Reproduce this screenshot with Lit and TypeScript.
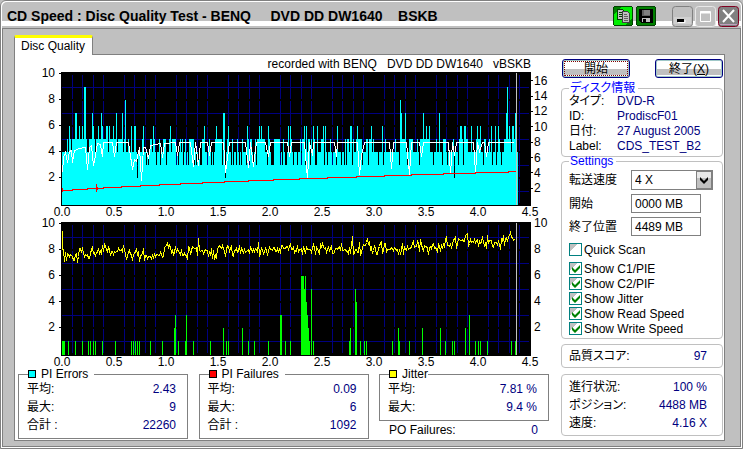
import { LitElement, html, svg, css } from "lit";
import { customElement, property } from "lit/decorators.js";

type Point = [number, number];
type Run = [number, number, number];

// Plot area is 470 x 134 units; one value unit is 13 tall and zero sits at y 132.
const W = 470;
const H = 134;
const ZERO = 132;
const UNIT = 13;

const bars = (color: string, runs: Run[]) =>
  runs.map(([x, w, v]) => svg`<rect x=${x} y=${ZERO - v * UNIT} width=${w} height=${v * UNIT + 1} fill=${color}></rect>`);

const grid = () => {
  const out = [];
  for (let k = 1; k < 45; k++) {
    if (k % 5 === 0) continue;
    const x = Math.round(0.5 + k * 10.4);
    for (let b = 0; b < 5; b++) out.push(svg`<rect x=${x} y=${3 + b * 26} width="1" height="24" fill="#000080"></rect>`);
  }
  for (const v of [1, 3, 5, 7, 9]) out.push(svg`<rect x="1" y=${ZERO - v * UNIT} width="467" height="1" fill="#000080"></rect>`);
  return out;
};

const pieLevels = (): number[] => {
  const lv = new Array(456).fill(4);
  const put = (v: number, list: (number | Point)[]) =>
    list.forEach((e) => {
      const [a, b] = typeof e === "number" ? [e, e] : e;
      for (let i = a; i <= b; i++) lv[i] = v;
    });
  put(5, [5, 8, [10, 22], [24, 24], [27, 32], [34, 44], [47, 54], [56, 60], 62, 63, 66, 69, 72, 73, 80, 88, 89, 92, 97, [101, 103], 107, 108, [110, 113], 118, 120, 123, [127, 131], 140, 141, 147, [153, 159], 165, 166, 170, 175, 180, 186, 188, 189, [193, 196], [198, 202], 207, [212, 217], 221, 226, 229]);
  put(5, [[238, 244], [246, 249], 252, 253, [259, 260], 268, 274, [282, 286], 291, [294, 299], [304, 309], 311, 323, 333, [338, 343], [347, 350], 355, [358, 366], 371, 374, [380, 383], 391, [396, 401], [404, 405], 409, 414, [416, 418], 427, 433, 437, [422, 423], [442, 448], 451, 452]);
  put(3, [45, 81, 84, 86, 94, 98, 104, 114, 116, 121, 124, 126, 132, 134, 136, [138, 139], 142, 145, 149, 151, 160, 169, 171, 174, 177, 179, 184, 187, 191, 194, 205, 209, [210, 211], 218, 220, [223, 224], 228]);
  put(3, [231, 235, 239, 243, 248, [253, 254], 262, 265, 270, 274, 279, 282, 284, 290, 300, 306, 316, 321, 337, 345, 357, 371, 380, 385, 396, 401, 412, 421, 430, 434, 439]);
  put(6, [7, 14, 17, 20, 31, 36, 40, 44, 45, 47, 51, 69, 72, 73, 81, 91, 108, 142, 154, 166, 185, 197, 199, 206, 226, 228, 242, 244, 251, 255, 261, 263, 275, 288, 289, 295, 309, 320, 364, 367, 398, 399, 402, 403, 409, 415, 418, 429, 433, 436, 450, 451, 447]);
  put(7, [13, 14, 30, 39, 54, 60, 161, 162, 339, 343, 361, 377, 444, 453]);
  put(8, [63, 338]);
  put(9, [22, 23, 445]);
  put(2, [75, 163, 392]);
  return lv;
};

const PIE: Run[] = pieLevels().map((v, i) => [i + 1, 1, v] as Run).reduce<Run[]>((acc, r) => {
  const last = acc[acc.length - 1];
  if (last && last[2] === r[2]) last[1]++;
  else acc.push([...r] as Run);
  return acc;
}, []);

const READ: Point[] = [
  [1, 100], [2, 85], [4, 80], [6, 90], [8, 79], [10, 78], [11, 90], [13, 78], [18, 76], [24, 75], [26, 97], [28, 75], [30, 73], [32, 93], [34, 83], [36, 71], [39, 72],
  [41, 84], [42, 70], [51, 70], [53, 84], [55, 70], [67, 70], [71, 97], [73, 87], [75, 89], [78, 75], [80, 108], [82, 75], [84, 75], [87, 86], [89, 73], [99, 71], [101, 85],
  [103, 71], [114, 70], [116, 83], [118, 70], [129, 70], [132, 94], [134, 70], [137, 93], [139, 70], [146, 70], [148, 83], [150, 70], [162, 70], [164, 100], [168, 70],
  [184, 70], [187, 95], [189, 70], [192, 94], [195, 70], [204, 70], [207, 84], [209, 70], [226, 70], [228, 84], [230, 70], [243, 70], [246, 106], [248, 70], [251, 83],
  [252, 70], [273, 70], [275, 84], [276, 70], [296, 70], [298, 102], [300, 83], [303, 70], [328, 70], [330, 96], [332, 70], [345, 70], [348, 102], [350, 70], [358, 70],
  [360, 84], [362, 70], [387, 70], [389, 101], [391, 70], [393, 83], [395, 70], [412, 70], [414, 100], [416, 70], [418, 79], [421, 70], [423, 70], [425, 84], [427, 70], [452, 70],
];

const WRITE: Point[] = [
  [1, 118], [11, 117], [26, 116], [42, 115], [60, 114], [79, 113], [98, 112], [119, 111], [141, 110], [163, 109], [187, 108], [212, 107],
  [238, 106], [266, 105], [295, 104], [323, 103], [350, 102], [382, 101], [414, 100], [447, 99], [454, 99],
];

const JITTER_MID: Point[] = [
  [2, 32], [13, 34], [20, 31], [25, 32], [32, 30], [40, 30], [44, 25], [48, 27], [51, 31], [60, 27], [66, 32], [74, 31], [83, 33], [101, 33], [103, 23], [109, 25], [112, 32],
  [116, 28], [124, 35], [127, 28], [146, 28], [153, 31], [157, 30], [169, 26], [176, 29], [186, 27], [199, 26], [202, 29], [216, 26], [230, 27], [249, 27], [252, 25],
  [257, 27], [269, 24], [282, 28], [290, 25], [297, 28], [306, 21], [311, 28], [319, 26], [334, 28], [352, 25], [362, 22], [366, 25], [376, 27], [382, 20], [389, 24],
  [394, 20], [401, 17], [406, 16], [408, 24], [411, 19], [426, 20], [432, 18], [439, 23], [442, 18], [448, 13], [455, 18],
];

const jitterLine = (): string => {
  const pts: string[] = ["1,8", "1,27"];
  let seed = 41;
  let seg = 0;
  for (let x = 2; x <= 454; x++) {
    while (seg < JITTER_MID.length - 2 && JITTER_MID[seg + 1][0] < x) seg++;
    const [ax, ay] = JITTER_MID[seg];
    const [bx, by] = JITTER_MID[seg + 1];
    seed = (seed * 1103515245 + 12345) % 2147483648;
    const r = seed / 2147483648 - 0.5;
    let y = ay + ((by - ay) * (x - ax)) / (bx - ax) + r * Math.abs(r) * 28;
    if (x === 137) y = 16;
    if (x === 291) y = 14;
    pts.push(`${x},${Math.round(y)}`);
  }
  return pts.join(" ");
};

const PIF: Run[] = [
  [1, 3, 1], ...[7, 14, 21, 27, 29, 32, 34, 41, 54, 70, 72, 74, 76, 78, 89, 101].map((x) => [x, 1, 1] as Run),
  [113, 1, 2], [114, 1, 3], [117, 1, 1], [124, 1, 1], [125, 1, 3], [132, 1, 1], [149, 1, 1], [162, 1, 2], [165, 1, 1], [167, 1, 1], [181, 1, 2],
  [187, 1, 1], [193, 1, 1], [207, 1, 1], [219, 2, 3], [224, 1, 1], [229, 1, 1],
  [240, 3, 6], [243, 1, 5], [244, 1, 6], [245, 1, 4], [246, 1, 3], [247, 1, 2], [248, 1, 1], [250, 1, 5], [252, 1, 1], [288, 1, 1], [289, 1, 2],
  [294, 1, 5], [295, 1, 4], [299, 1, 1], [303, 1, 1], [305, 1, 1], [331, 1, 1], [337, 1, 2], [338, 1, 1], [348, 1, 1], [361, 1, 2], [379, 1, 2],
  [384, 1, 1], [391, 1, 1], [393, 1, 1], [404, 1, 2], [408, 1, 3], [414, 1, 1], [417, 1, 1], [419, 1, 1], [426, 1, 1], [450, 1, 1], [454, 1, 1],
];

const path = (pts: Point[]) => pts.map((p) => p.join(",")).join(" ");
const steps = (pts: Point[]) =>
  pts.map(([x, y], i) => (i ? `H${x}V${y}` : `M${x},${y}`)).join("");

@customElement("scan-chart")
export class ScanChart extends LitElement {
  @property() kind = "errors";
  @property({ type: Array }) right: number[] = [];

  static styles = css`
    :host { display: grid; grid-template-columns: 46px 1fr 19px; }
    .left, .right { display: flex; flex-direction: column; }
    .left { margin: -12px 0 16px; }
    .left span { display: flex; align-items: center; justify-content: flex-end; flex: 1; gap: 4px; }
    .left span::after { content: ""; width: 2px; height: 1px; background: #000; }
    .right span { display: flex; align-items: center; flex: 1; gap: 1px; }
    .right span::before { content: ""; width: 2px; height: 1px; background: #000; }
    .fine { padding: 1px 0 10px; }
    .even { margin: -12px 0 16px; }
    .even span::before { background: none; }
    .plot { display: block; width: 100%; height: 134px; background: #000; }
    .axis { grid-column: 2; display: grid; grid-template-columns: repeat(10, 1fr); margin: 0 -25px 0 -25px; height: 16px; line-height: 12px; text-align: center; }
  `;

  render() {
    const errors = this.kind === "errors";
    return html`
      <div class="left">${[10, 8, 6, 4, 2].map((n) => html`<span>${n}</span>`)}</div>
      <svg class="plot" viewBox="0 0 ${W} ${H}" preserveAspectRatio="none" shape-rendering="crispEdges">
        ${grid()}
        ${errors
          ? svg`${bars("#00ffff", PIE)}
              <polyline points=${path(READ)} transform="translate(.5 .5)" fill="none" stroke="#fff"></polyline>
              <path d=${steps(WRITE)} transform="translate(.5 .5)" fill="none" stroke="#f00"></path>
              <path d="M1.5 116v4M35.5 112v8M36.5 115v3" stroke="#f00"></path>`
          : svg`${bars("#00ff00", PIF)}
              <polyline points=${jitterLine()} transform="translate(.5 .5)" fill="none" stroke="#ff0"></polyline>`}
        <rect x="455" y="1" width="1" height="132" fill="#c0c0c0"></rect>
      </svg>
      <div class="right ${errors ? "fine" : "even"}">${this.right.map((n) => html`<span>${n}</span>`)}</div>
      <div class="axis">${Array.from({ length: 10 }, (_, i) => html`<span>${(i / 2).toFixed(1)}</span>`)}</div>
    `;
  }
}

@customElement("app-root")
export class AppRoot extends LitElement {
  static styles = css`
    :host { display: block; font: 12px/14px "Liberation Sans", "Noto Sans CJK JP", sans-serif; font-feature-settings: "palt"; color: #000; background: #c0c0c0; }
    * { box-sizing: border-box; }
    .window { display: flex; flex-direction: column; min-height: 100vh; padding: 1px; border: 1px solid #808080; border-radius: 6px 6px 0 0; background: #fff; }
    .title { display: flex; align-items: center; height: 26px; padding: 2px 2px 0 5px; background: linear-gradient(#c0c0c0 19px, #fff 19px 24px, #c0c0c0 24px); border-radius: 5px 5px 0 0; }
    .title h1 { flex: 1; margin: 0; font: bold 14px/24px "Liberation Sans", sans-serif; white-space: pre; }
    .tool { width: 20px; height: 20px; margin-right: 3px; padding: 0; border: 0; background: none; }
    .win { width: 21px; height: 21px; margin-left: 2px; padding: 0; border: 0; background: none; }
    .tool + .win { margin-left: 13px; }
    .tool svg, .win svg { display: block; }
    .body { flex: 1; display: flex; flex-direction: column; padding: 6px 15px 5px 11px; border: 1px solid #808080; background: #c0c0c0; }
    .tab { align-self: flex-start; position: relative; height: 20px; margin-bottom: -1px; padding: 0 7px 0 6px; border: 1px solid #808080; border-top: 3px solid #ff0; border-bottom: 0; border-radius: 2px 2px 0 0; background: #fff; font: inherit; line-height: 15px; color: #000; }
    .panel { flex: 1; display: grid; grid-template-columns: 1fr 162px; gap: 11px; padding: 2px 1px 1px 0; border: 1px solid #808080; background: #fff; }
    .caption { margin: 0 19px 0 0; height: 15px; text-align: right; white-space: pre; }
    .stats { display: grid; grid-template-columns: repeat(3, 170px); justify-content: space-between; margin: -4px 1px 0 3px; }
    fieldset { min-width: 0; margin: 0; padding: 0 11px 2px 8px; border: 1px solid #808080; }
    legend { display: flex; align-items: center; gap: 5px; height: 12px; margin-left: 1px; padding: 0 6px 0 0; line-height: 12px; }
    .swatch { width: 8px; height: 8px; border: 1px solid #000; }
    .cyan { background: #0ff; } .red { background: #f00; } .yellow { background: #ff0; }
    .row { display: flex; justify-content: space-between; height: 18px; line-height: 18px; }
    .row span:last-child { color: #000080; }
    .jitter fieldset { padding-bottom: 4px; }
    .jitter legend { padding-right: 0; }
    .po { padding: 0 11px 0 10px; }
    .side { display: flex; flex-direction: column; }
    .buttons { display: flex; justify-content: space-between; padding: 2px 0 0 1px; }
    .push { width: 68px; height: 19px; padding: 0; border: 1px solid #000080; border-radius: 3px; background: linear-gradient(#fff 9px, #c0c0c0 9px 15px, #fff 15px); font: inherit; line-height: 16px; color: #000; box-shadow: 0 0 0 1px #a0c8c8 inset; }
    .focus { outline: 1px dotted #800000; outline-offset: -3px; }
    .group { padding: 0 7px; border-color: #c0c0c0; border-radius: 4px; }
    .group legend { padding: 0 3px 0 1px; margin-left: 0; color: #00f; }
    .disc { margin-top: 4px; height: 75px; }
    .info { display: grid; grid-template-columns: 48px 1fr; line-height: 15px; margin: 0; white-space: nowrap; }
    .info dt, .info dd { margin: 0; height: 15px; }
    .info dd { color: #000080; }
    .settings { height: 184px; margin-top: -2px; }
    .fields { display: grid; gap: 4px; padding-top: 3px; }
    .field { display: grid; grid-template-columns: 62px 1fr; align-items: center; }
    .field input, .field select { height: 19px; border: 1px solid #808080; border-radius: 0; background: #fff; font: inherit; color: #000; padding: 0 3px; }
    .field input { width: 70px; }
    .combo { position: relative; width: 82px; }
    .combo select { display: block; width: 100%; height: 20px; appearance: none; }
    .combo svg { position: absolute; top: 1px; right: 1px; pointer-events: none; }
    .check { display: flex; align-items: center; gap: 2px; height: 15px; white-space: nowrap; }
    .check input { appearance: none; width: 13px; height: 13px; margin: 0; border: 1px solid #008080; background: linear-gradient(135deg, #c0c0c0 35%, #fff 35%); }
    .check input:checked { background: url('data:image/svg+xml,<svg xmlns="http://www.w3.org/2000/svg" viewBox="0 0 11 11"><path d="M2 4v3l3 3 5-5V2L5 7z" fill="green"/></svg>'), linear-gradient(135deg, #c0c0c0 35%, #fff 35%); }
    .quick { margin: 6px 0 4px; }
    .box { border: 1px solid #c0c0c0; border-radius: 4px; padding: 2px 15px 2px 7px; }
    .score { margin: 5px 0 6px; }
    .progress { padding: 3px 15px 3px 7px; }
  `;

  private rows(list: string[][]) {
    return list.map(([k, v]) => html`<div class="row"><span>${k}</span><span>${v}</span></div>`);
  }

  private stat(title: string, color: string, list: string[][]) {
    return html`<fieldset>
      <legend><i class="swatch ${color}"></i>${title}</legend>
      ${this.rows(list)}
    </fieldset>`;
  }

  render() {
    return html`
      <div class="window">
        <header class="title">
          <h1>CD Speed : Disc Quality Test - BENQ     DVD DD DW1640    BSKB</h1>
          <button class="tool" aria-label="Copy"><svg width="20" height="20" shape-rendering="crispEdges">
            <rect x=".5" y=".5" width="19" height="19" rx="2" fill="#0e0" stroke="#004000"></rect>
            <path d="M1 1h7L1 8zM19 19v-7l-7 7z" fill="#008000"></path>
            <path d="M4.500 3.500h5l2 2v8h-7z" fill="#c0c0c0" stroke="#004000"></path>
            <path d="M6 6h3M6 8h3M6 10h3" stroke="#004000"></path>
            <path d="M9.500 5.500h5l2 2v9h-7z" fill="#c0c0c0" stroke="#404040"></path>
            <path d="M11 8.500h3M11 10.500h4M11 12.500h4M11 14.500h4" stroke="#606060"></path>
          </svg></button>
          <button class="tool" aria-label="Save"><svg width="20" height="20" shape-rendering="crispEdges">
            <rect x=".5" y=".5" width="19" height="19" rx="2" fill="#008000" stroke="#004000"></rect>
            <path d="M3 3h14v14H5l-2-2z" fill="#000"></path>
            <path d="M6 4h8v6H6z" fill="#606060"></path><path d="M8 4h6v5H8z" fill="#808080"></path>
            <path d="M6 12h8v4H6z" fill="#c0c0c0"></path><path d="M7 13h3v3H7z" fill="#000"></path>
          </svg></button>
          <button class="win" aria-label="Minimize"><svg width="21" height="21">
            <rect x=".5" y=".5" width="20" height="20" rx="3" fill="#c0c0c0" stroke="#808080"></rect>
            <path d="M2 11h17v7H2z" fill="#d0d0d0"></path><path d="M5 13h7v3H5z" fill="#000"></path><path d="M6 16.500h7V14" fill="none" stroke="#fff"></path>
          </svg></button>
          <button class="win" aria-label="Maximize"><svg width="21" height="21">
            <rect x=".5" y=".5" width="20" height="20" rx="3" fill="#c0c0c0" stroke="#e8e8e8"></rect>
            <path d="M5.500 5.500h10v10h-10z" fill="none" stroke="#fff"></path><path d="M5 6.500h10" stroke="#fff" stroke-width="2"></path>
          </svg></button>
          <button class="win" aria-label="Close"><svg width="21" height="21">
            <rect x=".5" y=".5" width="20" height="20" rx="3" fill="#808080" stroke="#800020"></rect>
            <path d="M2 18.500h17" stroke="#c0a0c0"></path>
            <path d="M5 4l11 12M16 4L5 16" stroke="#fff" stroke-width="2"></path>
          </svg></button>
        </header>
        <main class="body">
          <button class="tab">Disc Quality</button>
          <section class="panel">
            <div class="main">
              <p class="caption">recorded with BENQ   DVD DD DW1640   vBSKB</p>
              <scan-chart kind="errors" .right=${[16, 14, 12, 10, 8, 6, 4, 2]}></scan-chart>
              <scan-chart kind="failures" .right=${[10, 8, 6, 4, 2]}></scan-chart>
              <div class="stats">
                ${this.stat("PI Errors", "cyan", [["平均:", "2.43"], ["最大:", "9"], ["合計 :", "22260"]])}
                ${this.stat("PI Failures", "red", [["平均:", "0.09"], ["最大:", "6"], ["合計 :", "1092"]])}
                <div class="jitter">
                  ${this.stat("Jitter", "yellow", [["平均:", "7.81 %"], ["最大:", "9.4 %"]])}
                  <div class="row po"><span>PO Failures:</span><span>0</span></div>
                </div>
              </div>
            </div>
            <aside class="side">
              <div class="buttons">
                <button class="push focus">開始</button>
                <button class="push">終了(<u>X</u>)</button>
              </div>
              <fieldset class="group disc">
                <legend>ディスク情報</legend>
                <dl class="info">
                  <dt>タイプ:</dt><dd>DVD-R</dd>
                  <dt>ID:</dt><dd>ProdiscF01</dd>
                  <dt>日付:</dt><dd>27 August 2005</dd>
                  <dt>Label:</dt><dd>CDS_TEST_B2</dd>
                </dl>
              </fieldset>
              <fieldset class="group settings">
                <legend>Settings</legend>
                <div class="fields">
                  <div class="field"><label for="speed">転送速度</label>
                    <div class="combo"><select id="speed"><option>4 X</option></select>
                      <svg width="16" height="18"><rect x=".5" y=".5" width="15" height="17" fill="#c0c0c0" stroke="#808080"></rect><path d="M1 1h14v6H1z" fill="#e8e8e8"></path><path d="M4 6l4 4 4-4v3l-4 4-4-4z" fill="#000"></path></svg>
                    </div></div>
                  <div class="field"><label for="start">開始</label><input id="start" value="0000 MB" /></div>
                  <div class="field"><label for="end">終了位置</label><input id="end" value="4489 MB" /></div>
                </div>
                <label class="check quick"><input type="checkbox" />Quick Scan</label>
                ${["C1/PIE", "C2/PIF", "Jitter", "Read Speed", "Write Speed"].map(
                  (n) => html`<label class="check"><input type="checkbox" checked />Show ${n}</label>`
                )}
              </fieldset>
              <div class="box score">${this.rows([["品質スコア:", "97"]])}</div>
              <div class="box progress">${this.rows([["進行状況:", "100 %"], ["ポジション:", "4488 MB"], ["速度:", "4.16 X"]])}</div>
            </aside>
          </section>
        </main>
      </div>
    `;
  }
}
